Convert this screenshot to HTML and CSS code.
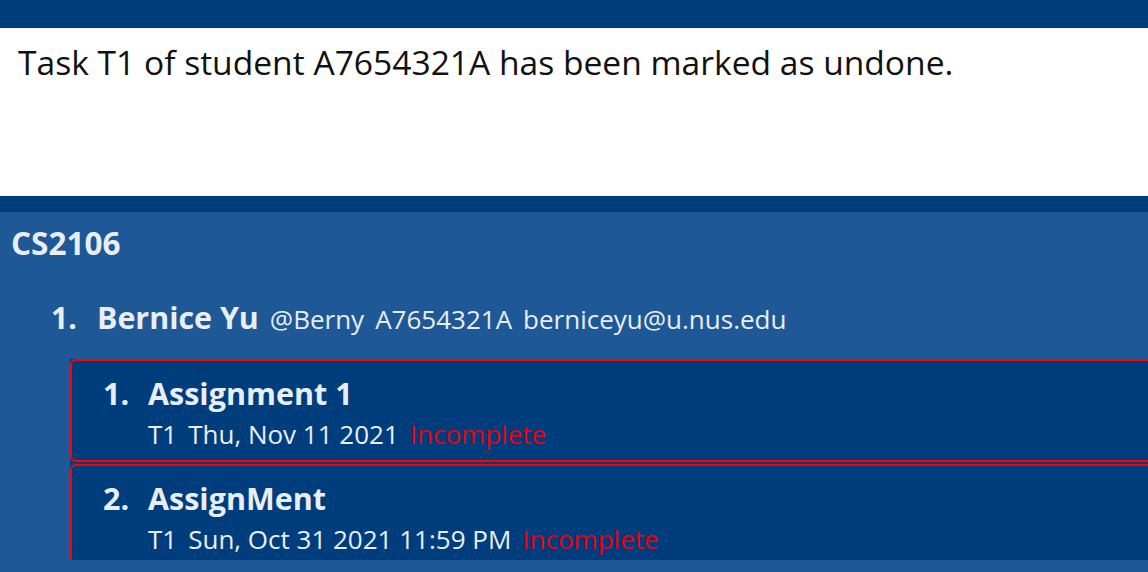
FILE: index.html
```html
<!DOCTYPE html>
<html>
<head>
<meta charset="utf-8">
<link rel="stylesheet" href="styles.css">
</head>
<body>
<div class="app">
  <div class="topbar"></div>
  <div class="result">Task T1 of student A7654321A has been marked as undone.</div>
  <div class="divider"></div>
  <div class="panel">
    <div class="module">CS2106</div>
    <div class="student">
      <span class="num">1.</span>
      <span class="name">Bernice Yu</span>
      <span class="meta">@Berny</span>
      <span class="meta">A7654321A</span>
      <span class="meta">berniceyu@u.nus.edu</span>
    </div>
    <div class="tasks">
      <div class="card">
        <div class="title"><span class="num">1.</span><span>Assignment 1</span></div>
        <div class="detail"><span>T1</span><span>Thu, Nov 11 2021</span><span class="status">Incomplete</span></div>
      </div>
      <div class="card">
        <div class="title"><span class="num">2.</span><span>AssignMent</span></div>
        <div class="detail"><span>T1</span><span>Sun, Oct 31 2021 11:59 PM</span><span class="status">Incomplete</span></div>
      </div>
    </div>
  </div>
</div>
</body>
</html>
```
FILE: styles.css
```css
* { box-sizing: border-box; }
html, body { margin: 0; padding: 0; }
body {
  width: 1148px;
  height: 572px;
  overflow: hidden;
  background: #003d7c;
  font-family: "Open Sans", "Noto Sans", sans-serif;
}
.app { display: flex; flex-direction: column; height: 572px; }
.topbar { height: 28px; background: #003d7c; flex: none; }
.result {
  height: 168px;
  flex: none;
  background: #ffffff;
  color: #111;
  font-size: 33.6px;
  line-height: 40px;
  padding: 14px 18px 0;
  font-weight: 400;
}
.divider { height: 16px; flex: none; background: #003d7c; }
.panel {
  flex: 1;
  background: #1e5896;
  color: #e8eef6;
  padding: 13px 0 12px 11px;
  display: flex;
  flex-direction: column;
  min-height: 0;
}
.module { font-size: 31.5px; line-height: 36px; font-weight: 700; }
.student {
  margin-top: 39px;
  padding-left: 40px;
  display: flex;
  align-items: baseline;
  gap: 11px;
  line-height: 36px;
}
.student .num { font-size: 30px; font-weight: 700; width: 35px; }
.student .name { font-size: 30.4px; font-weight: 700; }
.student .meta { font-size: 26px; }
.tasks {
  margin-top: 22px;
  margin-left: 59px;
  flex: 1;
  min-height: 0;
  overflow: hidden;
  background: #003d7c;
  display: flex;
  flex-direction: column;
  gap: 2px;
}
.card {
  flex: none;
  border: 2px solid #ff0000;
  border-right: none;
  border-radius: 6px 0 0 6px;
  padding: 14px 0 11px 31px;
}
.title {
  display: flex;
  gap: 10px;
  font-size: 30.5px;
  line-height: 36px;
  font-weight: 700;
}
.title .num { width: 35px; }
.detail {
  margin-top: 8px;
  padding-left: 45px;
  display: flex;
  gap: 11px;
  font-size: 26px;
  line-height: 30px;
}
.status {
  color: #e8000f;
  font-size: 26px;
}
```
